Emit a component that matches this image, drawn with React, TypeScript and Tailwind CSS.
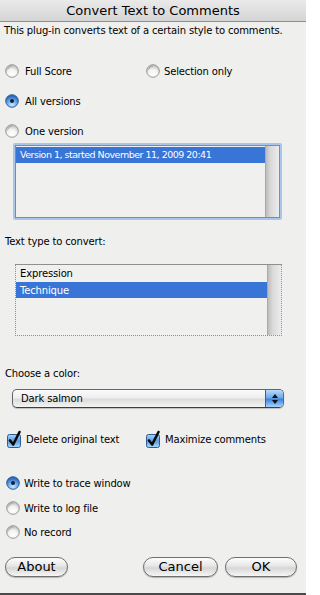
import React from "react";

const font = "font-['DejaVu_Sans',sans-serif]";

function Radio({ checked }: { checked?: boolean }) {
  return (
    <svg width="14" height="14" viewBox="0 0 14 14" className="shrink-0">
      <defs>
        <radialGradient id="rOff" cx="50%" cy="75%" r="65%">
          <stop offset="0%" stopColor="#ffffff" />
          <stop offset="60%" stopColor="#f2f2f2" />
          <stop offset="100%" stopColor="#c4c4c4" />
        </radialGradient>
        <radialGradient id="rOn" cx="50%" cy="80%" r="70%">
          <stop offset="0%" stopColor="#c8ecff" />
          <stop offset="50%" stopColor="#6fb0ec" />
          <stop offset="100%" stopColor="#2a63b8" />
        </radialGradient>
      </defs>
      <circle cx="7" cy="7" r="6.3" fill={checked ? "url(#rOn)" : "url(#rOff)"} stroke={checked ? "#2d5593" : "#8d8d8d"} strokeWidth="0.9" />
      {checked ? (
        <circle cx="7" cy="7" r="2" fill="#10203a" />
      ) : (
        <path d="M2.5 5.5 A5 5 0 0 1 7 2" stroke="#a8a8a8" strokeWidth="1" fill="none" />
      )}
    </svg>
  );
}

function Check() {
  return (
    <svg width="16" height="17" viewBox="0 0 16 17" className="shrink-0 overflow-visible">
      <defs>
        <linearGradient id="cb" x1="0" y1="0" x2="0" y2="1">
          <stop offset="0%" stopColor="#a9d3f7" />
          <stop offset="50%" stopColor="#5c9de2" />
          <stop offset="100%" stopColor="#a6dcff" />
        </linearGradient>
      </defs>
      <rect x="0.5" y="3.5" width="13" height="13" rx="2" fill="url(#cb)" stroke="#2f5b95" />
      <path d="M3 9.5 L6.2 13.5 L12.5 1" stroke="#0a0a0a" strokeWidth="2.6" fill="none" strokeLinecap="round" strokeLinejoin="round" />
    </svg>
  );
}

function Pill({ label, w }: { label: string; w: string }) {
  return (
    <div
      className={`${w} h-[20px] rounded-full border border-[#6f6f6f] bg-[linear-gradient(#fdfdfd,#e6e6e6_45%,#d6d6d6_55%,#f6f6f6)] shadow-[0_1px_1px_rgba(0,0,0,0.25)] flex items-center justify-center text-[13px] tracking-normal text-black`}
    >
      {label}
    </div>
  );
}

function Scrollbar() {
  return <div className="w-[14px] h-full border-l border-[#a9a9a9] bg-[linear-gradient(to_right,#bdbdbd,#d9d9d9_35%,#ececec)]" />;
}

export default function App() {
  return (
    <div className={`w-[306px] h-[595px] bg-[#efefed] flex flex-col text-[10px] tracking-[-0.15px] text-black ${font}`}>
      {/* title bar */}
      <div className="h-[22px] shrink-0 border-b border-[#8e8e8e] bg-[linear-gradient(#eaeaea,#d4d4d4)] flex items-center justify-center text-[13px] tracking-normal">
        Convert Text to Comments
      </div>

      <div className="h-[16px] flex items-center pl-[4px]">This plug-in converts text of a certain style to comments.</div>

      {/* range */}
      <div className="mt-[23px] h-[20px] flex items-center">
        <div className="w-[146px] flex items-center gap-[6px] pl-[5px]">
          <Radio />
          <span>Full Score</span>
        </div>
        <div className="flex items-center gap-[4px]">
          <Radio />
          <span>Selection only</span>
        </div>
      </div>
      <div className="mt-[10px] h-[20px] flex items-center gap-[6px] pl-[5px]">
        <Radio checked />
        <span>All versions</span>
      </div>
      <div className="mt-[10px] h-[20px] flex items-center gap-[6px] pl-[5px]">
        <Radio />
        <span>One version</span>
      </div>

      {/* versions list */}
      <div className="mt-[2px] ml-[13px] w-[269px] h-[77px] rounded-[2px] border-[2px] border-[#a9c6ea] flex">
        <div className="flex-1 border border-[#6f8fb8] flex bg-[#f0f0ee]">
          <div className="flex-1 pt-[1px]">
            <div className="h-[16px] bg-[#3875d7] text-white flex items-center pl-[4px] text-[9.5px] tracking-[-0.5px]">
              Version 1, started November 11, 2009 20:41
            </div>
          </div>
          <Scrollbar />
        </div>
      </div>

      <div className="mt-[13px] h-[16px] flex items-center pl-[5px]">Text type to convert:</div>

      <div className="mt-[15px] ml-[15px] w-[267px] h-[72px] border border-dotted border-[#8f8f8f] [border-top-style:solid] flex bg-[#f0f0ee]">
        <div className="flex-1">
          <div className="h-[17px] flex items-center pl-[4px]">Expression</div>
          <div className="h-[16px] bg-[#3875d7] text-white flex items-center pl-[4px]">Technique</div>
        </div>
        <Scrollbar />
      </div>

      <div className="mt-[29px] h-[16px] flex items-center pl-[5px]">Choose a color:</div>

      {/* popup */}
      <div className="mt-[8px] ml-[12px] w-[272px] h-[19px] rounded-[5px] border border-[#6b6270] border-b-[#4b3352] bg-[linear-gradient(#fbfbfb,#eeeeee_45%,#dcdcdc_55%,#f4f4f4)] flex overflow-hidden shadow-[0_1px_1px_rgba(0,0,0,0.2)]">
        <div className="flex-1 flex items-center pl-[8px]">Dark salmon</div>
        <div className="w-[18px] h-full border-l border-[#3d5f92] bg-[linear-gradient(#b9dcfb,#6ea9ea_45%,#3d82dc_55%,#a5d5fd)] flex flex-col items-center justify-center gap-[2px]">
          <svg width="6" height="4" viewBox="0 0 6 4">
            <path d="M3 0 L6 4 L0 4 Z" fill="#111" />
          </svg>
          <svg width="6" height="4" viewBox="0 0 6 4">
            <path d="M0 0 L6 0 L3 4 Z" fill="#111" />
          </svg>
        </div>
      </div>

      {/* checkboxes */}
      <div className="mt-[20px] h-[20px] flex items-end">
        <div className="w-[146px] flex items-center gap-[3px] pl-[7px]">
          <Check />
          <span>Delete original text</span>
        </div>
        <div className="flex items-center gap-[3px]">
          <Check />
          <span>Maximize comments</span>
        </div>
      </div>

      {/* record */}
      <div className="mt-[25px] h-[20px] flex items-center gap-[4px] pl-[6px]">
        <Radio checked />
        <span>Write to trace window</span>
      </div>
      <div className="mt-[5px] h-[20px] flex items-center gap-[4px] pl-[6px]">
        <Radio />
        <span>Write to log file</span>
      </div>
      <div className="mt-[4px] h-[20px] flex items-center gap-[4px] pl-[6px]">
        <Radio />
        <span>No record</span>
      </div>

      {/* buttons */}
      <div className="mt-[15px] h-[20px] flex items-center px-[5px]">
        <Pill label="About" w="w-[63px]" />
        <div className="flex-1" />
        <Pill label="Cancel" w="w-[75px]" />
        <div className="w-[7px]" />
        <Pill label="OK" w="w-[72px]" />
        <div className="w-[4px]" />
      </div>

      <div className="flex-1" />
      <div className="h-[2px] bg-[#4a4a4a]" />
    </div>
  );
}
